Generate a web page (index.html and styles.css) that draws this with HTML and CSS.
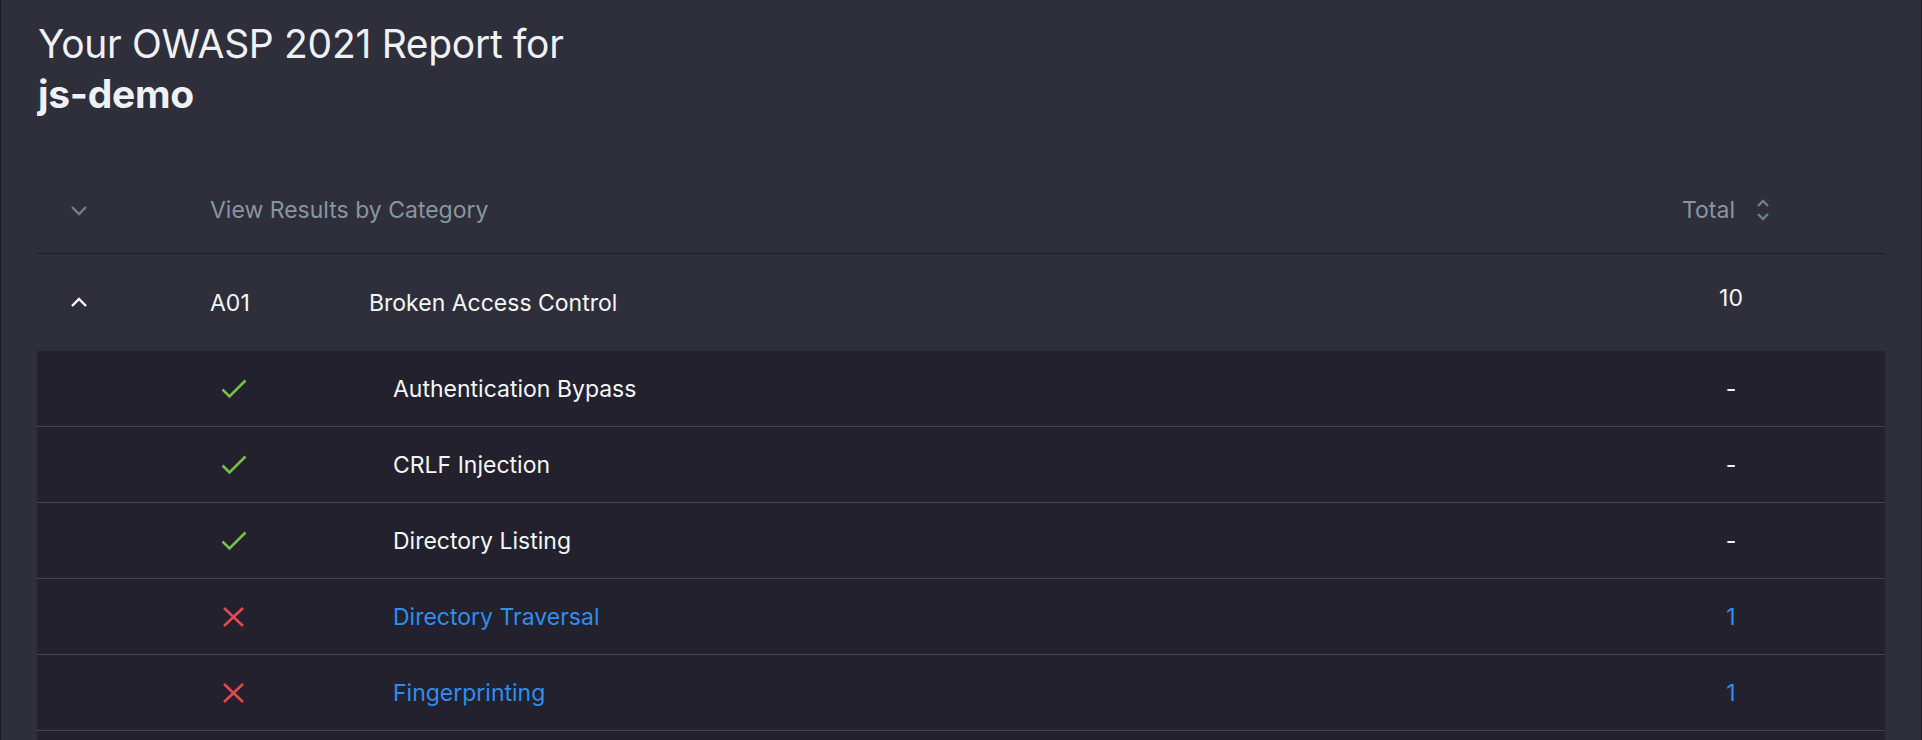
FILE: index.html
```html
<!DOCTYPE html>
<html lang="en">
<head>
<meta charset="utf-8">
<title>OWASP 2021 Report</title>
<link rel="stylesheet" href="styles.css">
</head>
<body>
<div class="page">
  <h1 class="title">Your OWASP 2021 Report for<br><strong>js-demo</strong></h1>

  <div class="table">
    <div class="row head">
      <div class="cell chev">
        <svg width="18" height="11" viewBox="0 0 18 11"><path d="M2 2 L9 9 L16 2" fill="none" stroke="#6f7f89" stroke-width="2.4"/></svg>
      </div>
      <div class="cell span2 muted">View Results by Category</div>
      <div class="cell total-head muted">Total
        <svg class="sort" width="16" height="26" viewBox="0 0 16 26"><path d="M3 9 L8 4 L13 9" fill="none" stroke="#6f7f89" stroke-width="2.4"/><path d="M3 17 L8 22 L13 17" fill="none" stroke="#6f7f89" stroke-width="2.4"/></svg>
      </div>
      <div class="cell"></div>
    </div>

    <div class="row cat">
      <div class="cell chev">
        <svg width="18" height="11" viewBox="0 0 18 11"><path d="M2 9 L9 2 L16 9" fill="none" stroke="#ffffff" stroke-width="2.4"/></svg>
      </div>
      <div class="cell">A01</div>
      <div class="cell">Broken Access Control</div>
      <div class="cell num raised">10</div>
      <div class="cell"></div>
    </div>

    <div class="sub">
      <div class="srow">
        <div class="cell"></div>
        <div class="cell icon"><svg width="26" height="20" viewBox="0 0 26 20"><path d="M1.5 10.5 L8.5 17.5 L24.5 1.5" fill="none" stroke="#78c043" stroke-width="2.6"/></svg></div>
        <div class="cell">Authentication Bypass</div>
        <div class="cell num">-</div>
        <div class="cell"></div>
      </div>
      <div class="srow">
        <div class="cell"></div>
        <div class="cell icon"><svg width="26" height="20" viewBox="0 0 26 20"><path d="M1.5 10.5 L8.5 17.5 L24.5 1.5" fill="none" stroke="#78c043" stroke-width="2.6"/></svg></div>
        <div class="cell">CRLF Injection</div>
        <div class="cell num">-</div>
        <div class="cell"></div>
      </div>
      <div class="srow">
        <div class="cell"></div>
        <div class="cell icon"><svg width="26" height="20" viewBox="0 0 26 20"><path d="M1.5 10.5 L8.5 17.5 L24.5 1.5" fill="none" stroke="#78c043" stroke-width="2.6"/></svg></div>
        <div class="cell">Directory Listing</div>
        <div class="cell num">-</div>
        <div class="cell"></div>
      </div>
      <div class="srow">
        <div class="cell"></div>
        <div class="cell icon"><svg width="26" height="20" viewBox="0 0 26 20"><path d="M3 1 L22 19 M22 1 L3 19" fill="none" stroke="#e5484d" stroke-width="2.6"/></svg></div>
        <div class="cell link">Directory Traversal</div>
        <div class="cell num link">1</div>
        <div class="cell"></div>
      </div>
      <div class="srow">
        <div class="cell"></div>
        <div class="cell icon"><svg width="26" height="20" viewBox="0 0 26 20"><path d="M3 1 L22 19 M22 1 L3 19" fill="none" stroke="#e5484d" stroke-width="2.6"/></svg></div>
        <div class="cell link">Fingerprinting</div>
        <div class="cell num link">1</div>
        <div class="cell"></div>
      </div>
      <div class="srow">
        <div class="cell"></div>
        <div class="cell icon"></div>
        <div class="cell"></div>
        <div class="cell num"></div>
        <div class="cell"></div>
      </div>
    </div>
  </div>
</div>
</body>
</html>
```

FILE: styles.css
```css
* { box-sizing: border-box; }
html, body { margin: 0; padding: 0; background: #2f2e3b; }
body {
  font-family: Inter, "Noto Sans", "Liberation Sans", sans-serif;
  color: #f4f6f8;
  overflow: hidden;
}
.page {
  height: 740px;
  overflow: hidden;
  background: #2f2e3b;
  border-left: 1px solid #1d1c24;
  border-right: 1px solid #1d1c24;
  padding: 0 36px;
}
.title {
  margin: 0;
  padding: 19px 0 0 1px;
  font-size: 39px;
  line-height: 50px;
  font-weight: 400;
  color: #eef2f6;
  letter-spacing: -0.3px;
}
.title strong { font-weight: 700; }
.table { margin-top: 48px; }
.row, .srow {
  display: grid;
  grid-template-columns: 173px 159px 1fr 98px 105px;
  align-items: center;
  font-size: 23px;
}
.srow { grid-template-columns: 184px 172px 1fr 98px 105px; }
.head {
  height: 87px;
  border-bottom: 1px solid #1e1d26;
}
.span2 { grid-column: 2 / 4; }
.muted { color: #8896a0; }
.chev { padding-left: 33px; display: flex; align-items: center; }
.total-head { display: flex; align-items: center; gap: 20px; }
.sort { display: block; }
.cat { height: 97px; }
.num { text-align: center; }
.raised { padding-bottom: 10px; }
.sub { background: #22212d; }
.srow {
  height: 76px;
  border-bottom: 1px solid #44434e;
}
.icon { display: flex; align-items: center; }
.link { color: #2e8ef2; }
```
